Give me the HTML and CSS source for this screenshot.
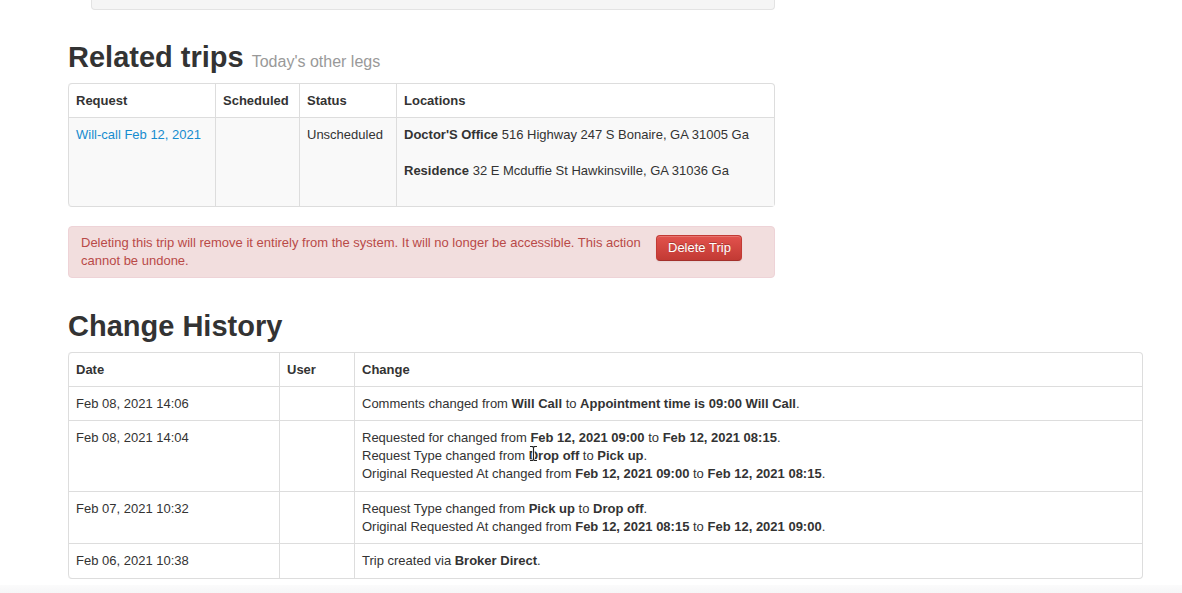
FILE: index.html
```html
<!DOCTYPE html>
<html>
<head>
<meta charset="utf-8">
<link rel="stylesheet" href="styles.css">
</head>
<body>
<div class="page">
  <div class="well-tail"></div>

  <section class="related">
    <h2 class="heading">Related trips <small>Today's other legs</small></h2>
    <table class="grid striped rel-table">
      <colgroup>
        <col style="width:147px"><col style="width:84px"><col style="width:97px"><col>
      </colgroup>
      <thead>
        <tr><th>Request</th><th>Scheduled</th><th>Status</th><th>Locations</th></tr>
      </thead>
      <tbody>
        <tr>
          <td><a href="#" class="link">Will-call Feb 12, 2021</a></td>
          <td></td>
          <td>Unscheduled</td>
          <td>
            <p class="loc"><b>Doctor'S Office</b> 516 Highway 247 S Bonaire, GA 31005 Ga</p>
            <p class="loc"><b>Residence</b> 32 E Mcduffie St Hawkinsville, GA 31036 Ga</p>
          </td>
        </tr>
      </tbody>
    </table>

    <div class="alert">
      <div class="alert-text">Deleting this trip will remove it entirely from the system. It will no longer be accessible. This action cannot be undone.</div>
      <button class="btn-danger">Delete Trip</button>
    </div>
  </section>

  <h2 class="heading history-heading">Change History</h2>
  <table class="grid hist-table">
    <colgroup>
      <col style="width:211px"><col style="width:75px"><col>
    </colgroup>
    <thead>
      <tr><th>Date</th><th>User</th><th>Change</th></tr>
    </thead>
    <tbody>
      <tr>
        <td>Feb 08, 2021 14:06</td>
        <td></td>
        <td>Comments changed from <b>Will Call</b> to <b>Appointment time is 09:00 Will Call</b>.</td>
      </tr>
      <tr>
        <td>Feb 08, 2021 14:04</td>
        <td></td>
        <td>Requested for changed from <b>Feb 12, 2021 09:00</b> to <b>Feb 12, 2021 08:15</b>.<br>
            Request Type changed from <b>Drop off</b> to <b>Pick up</b>.<br>
            Original Requested At changed from <b>Feb 12, 2021 09:00</b> to <b>Feb 12, 2021 08:15</b>.</td>
      </tr>
      <tr>
        <td>Feb 07, 2021 10:32</td>
        <td></td>
        <td>Request Type changed from <b>Pick up</b> to <b>Drop off</b>.<br>
            Original Requested At changed from <b>Feb 12, 2021 08:15</b> to <b>Feb 12, 2021 09:00</b>.</td>
      </tr>
      <tr>
        <td>Feb 06, 2021 10:38</td>
        <td></td>
        <td>Trip created via <b>Broker Direct</b>.</td>
      </tr>
    </tbody>
  </table>
</div>
<svg class="cursor" width="9" height="17" viewBox="0 0 9 17" aria-hidden="true">
  <path d="M1 1.5h2.5l1 1 1-1H8M4.5 2.5v12M1 15.5h2.5l1-1 1 1H8" fill="none" stroke="#fff" stroke-width="2.6" stroke-linecap="round"/>
  <path d="M1 1.5h2.5l1 1 1-1H8M4.5 2.5v12M1 15.5h2.5l1-1 1 1H8" fill="none" stroke="#222" stroke-width="1.1"/>
</svg>
<div class="footer-strip"></div>
</body>
</html>
```

FILE: styles.css
```css
html, body {
  margin: 0;
  padding: 0;
  background: #fff;
}

body {
  font-family: "Liberation Sans", Arial, Helvetica, sans-serif;
  font-size: 13px;
  line-height: 18px;
  color: #333;
  height: 593px;
  overflow: hidden;
  position: relative;
}

.page {
  padding-left: 68px;
  width: 1075px;
}

.well-tail {
  margin-left: 23px;
  width: 682px;
  height: 9px;
  background: #f5f5f5;
  border: 1px solid #e3e3e3;
  border-top: 0;
  border-radius: 0 0 4px 4px;
}

.related {
  width: 707px;
}

.heading {
  font-size: 29px;
  line-height: 40px;
  height: 40px;
  font-weight: bold;
  color: #333;
  margin: 27px 0 6px;
  white-space: nowrap;
}

.heading small {
  font-size: 16px;
  line-height: 1;
  font-weight: normal;
  color: #999;
}

.history-heading {
  margin: 28px 0 6px;
}

.grid {
  width: 100%;
  table-layout: fixed;
  border-collapse: separate;
  border-spacing: 0;
  border: 1px solid #ddd;
  border-left: 0;
  border-radius: 4px;
  margin: 0 0 19px;
}

.grid th,
.grid td {
  padding: 8px 8px 7px 7px;
  text-align: left;
  vertical-align: top;
  border-left: 1px solid #ddd;
  line-height: 18px;
}

.rel-table tbody td,
.hist-table tbody tr:nth-child(even) td {
  padding-bottom: 8px;
}

.grid th {
  font-weight: bold;
}

.grid tbody td {
  border-top: 1px solid #ddd;
}

.striped tbody tr td {
  background: #f9f9f9;
}

.grid thead tr:first-child th:first-child {
  border-top-left-radius: 4px;
}

.grid tbody tr:last-child td:first-child {
  border-bottom-left-radius: 4px;
}

.link {
  color: #168ccf;
  text-decoration: none;
}

.loc {
  margin: 0 0 18px;
}

.alert {
  display: flex;
  align-items: flex-start;
  background: #f2dede;
  border: 1px solid #eed3d7;
  border-radius: 4px;
  color: #b94a48;
  padding: 7px 32px 7px 12px;
  margin-bottom: 18px;
}

.alert-text {
  flex: 1;
}

.btn-danger {
  margin-left: 14px;
  margin-top: 1px;
  font-family: inherit;
  font-size: 13px;
  line-height: 18px;
  color: #fff;
  padding: 3px 11px;
  width: 86px;
  height: 26px;
  border: 1px solid #c23a34;
  border-bottom-color: #a3302b;
  border-radius: 4px;
  background: linear-gradient(#e2524d, #c23a34);
  box-shadow: inset 0 1px 0 rgba(255,255,255,0.2), 0 1px 2px rgba(0,0,0,0.05);
  text-shadow: 0 -1px 0 rgba(0,0,0,0.25);
  white-space: nowrap;
}

.cursor {
  position: absolute;
  left: 529px;
  top: 445px;
}

.footer-strip {
  position: absolute;
  left: 0;
  right: 0;
  bottom: 0;
  height: 8px;
  background: linear-gradient(#fbfbfb, #f6f6f7);
}
```
